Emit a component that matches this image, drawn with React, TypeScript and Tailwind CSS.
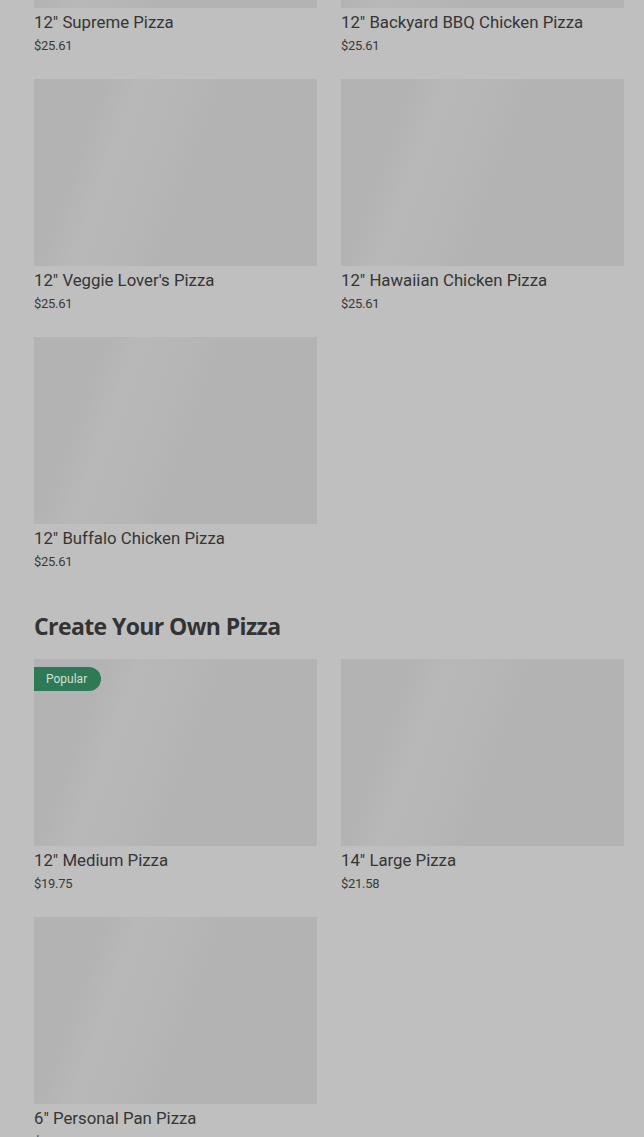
import React from "react";

interface Item {
  name: string;
  price: string;
  popular?: boolean;
}

const specialty: Item[] = [
  { name: '12" Supreme Pizza', price: "$25.61" },
  { name: '12" Backyard BBQ Chicken Pizza', price: "$25.61" },
  { name: '12" Veggie Lover\'s Pizza', price: "$25.61" },
  { name: '12" Hawaiian Chicken Pizza', price: "$25.61" },
  { name: '12" Buffalo Chicken Pizza', price: "$25.61" },
];

const createOwn: Item[] = [
  { name: '12" Medium Pizza', price: "$19.75", popular: true },
  { name: '14" Large Pizza', price: "$21.58" },
  { name: '6" Personal Pan Pizza', price: "$9.99" },
];

function MenuCard({ item }: { item: Item }) {
  return (
    <div className="flex flex-col">
      {/* Image placeholder (loading skeleton) */}
      <div className="relative h-[187px] overflow-hidden bg-[#b3b3b3]">
        <div className="absolute inset-0 bg-[linear-gradient(110deg,#b3b3b3_20%,#b8b8b8_30%,#b6b6b6_45%,#b3b3b3_55%)]" />
        {item.popular && (
          <span className="absolute left-0 top-2 flex h-6 items-center rounded-r-full bg-[#2f7a56] pl-3 pr-[14px] text-[12px] text-[#cfe0d6]">
            Popular
          </span>
        )}
      </div>
      <h3 className="mt-[3px] text-[16.8px] leading-[22px] text-[#353535]">{item.name}</h3>
      <p className="mt-[4px] text-[13px] leading-[18px] tracking-[-0.3px] text-[#3a3a3a]">{item.price}</p>
    </div>
  );
}

export default function App() {
  return (
    <div
      className="min-h-screen overflow-hidden bg-[#bfbfbf]"
      style={{ fontFamily: "Roboto, 'Liberation Sans', sans-serif" }}
    >
      <div className="-mt-[179px] pl-[34px] pr-[20px]">
        <div className="grid grid-cols-2 gap-x-6 gap-y-6">
          {specialty.map((item) => (
            <MenuCard key={item.name} item={item} />
          ))}
        </div>

        <h2
          className="mt-[40px] text-[23px] font-bold leading-[30px] tracking-[-0.6px] text-[#333333]"
          style={{ fontFamily: "'Open Sans', Lato, sans-serif" }}
        >
          Create Your Own Pizza
        </h2>

        <div className="mt-[18px] grid grid-cols-2 gap-x-6 gap-y-6 pb-10">
          {createOwn.map((item) => (
            <MenuCard key={item.name} item={item} />
          ))}
        </div>
      </div>
    </div>
  );
}
